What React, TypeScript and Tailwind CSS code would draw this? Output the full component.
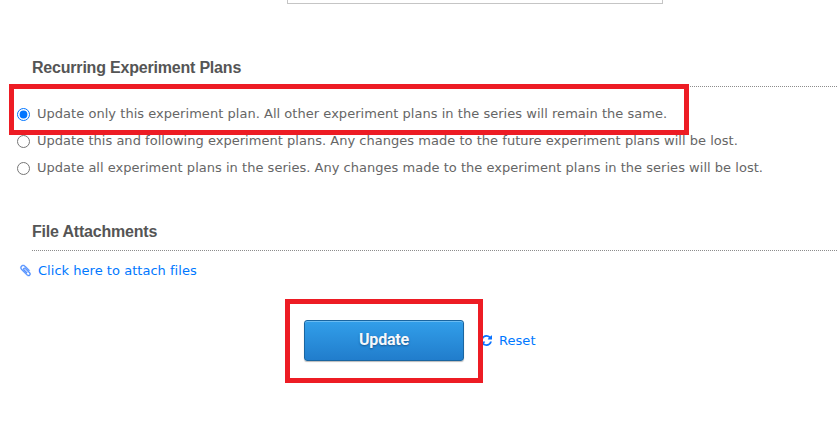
import React from 'react';

const options = [
  { label: 'Update only this experiment plan. All other experiment plans in the series will remain the same.', tracking: 'tracking-[0.034px]' },
  { label: 'Update this and following experiment plans. Any changes made to the future experiment plans will be lost.', tracking: 'tracking-[0.026px]' },
  { label: 'Update all experiment plans in the series. Any changes made to the experiment plans in the series will be lost.', tracking: 'tracking-[0.024px]' },
];

function SectionTitle({ children }: { children: React.ReactNode }) {
  return (
    <h2 className="ml-8 h-[30px] border-b border-dotted border-[#8c8c8c] font-['Liberation_Sans',Arial,sans-serif] text-base leading-[22px] font-bold tracking-[-0.2px] text-[#555]">
      {children}
    </h2>
  );
}

function PaperclipIcon() {
  return (
    <svg className="mb-px h-[13px] w-[13px] fill-[#4c8dff] stroke-[#4c8dff] stroke-[60]" viewBox="0 0 1792 1792" aria-hidden="true">
      <path d="M1596 1385q0 117-79 196t-196 79q-135 0-235-100l-777-776q-113-115-113-271 0-159 110-270t269-111q158 0 273 113l605 606q10 10 10 22 0 16-30.5 46.5t-46.5 30.5q-13 0-23-10l-606-607q-79-77-181-77-106 0-179 75t-73 181q0 105 76 181l776 777q63 63 145 63 64 0 106-42t42-106q0-82-63-145l-581-581q-26-24-60-24-29 0-48 19t-19 48q0 32 25 59l410 410q10 10 10 22 0 16-31 47t-47 31q-12 0-22-10l-410-410q-63-61-63-149 0-82 57-139t139-57q88 0 149 63l581 581q100 98 100 235z" />
    </svg>
  );
}

function RefreshIcon() {
  return (
    <svg className="mb-px h-[11px] w-[11px] fill-[#0a73ff]" viewBox="0 0 1536 1536" aria-hidden="true">
      <path d="M1511 928q0 5-1 7-64 268-268 434.5t-478 166.5q-146 0-282.5-55t-243.5-157l-129 129q-19 19-45 19t-45-19-19-45v-448q0-26 19-45t45-19h448q26 0 45 19t19 45-19 45l-137 137q71 66 161 102t187 36q134 0 250-65t186-179q11-17 53-117 8-23 30-23h192q13 0 22.5 9.5t9.5 22.5zm25-800v448q0 26-19 45t-45 19h-448q-26 0-45-19t-19-45 19-45l138-138q-148-137-349-137-134 0-250 65t-186 179q-11 17-53 117-8 23-30 23h-199q-13 0-22.5-9.5t-9.5-22.5v-7q65-268 270-434.5t480-166.5q146 0 284 55.5t245 156.5l130-129q19-19 45-19t45 19 19 45z" />
    </svg>
  );
}

export default function App() {
  return (
    <main className="relative h-[430px] w-full overflow-hidden bg-white font-[Verdana,'DejaVu_Sans',sans-serif] text-[13px] text-[#666]">
      <div className="ml-[287px] h-1 w-[376px] border-x border-b border-[#c5c5c5]" />

      <section className="pt-[53px]">
        <SectionTitle>Recurring Experiment Plans</SectionTitle>
        <div className="flex flex-col pt-[13px] pl-[17px]">
          {options.map((option, index) => (
            <label key={option.label} className="flex h-[27px] items-center gap-[7px] whitespace-nowrap">
              <input type="radio" name="recurrence" defaultChecked={index === 0} className="mt-px h-[13px] w-[13px] shrink-0" />
              <span className={option.tracking}>{option.label}</span>
            </label>
          ))}
        </div>
      </section>

      <section className="pt-10">
        <SectionTitle>File Attachments</SectionTitle>
        <a className="mt-[10px] ml-[19px] flex h-5 items-center gap-[6px] whitespace-nowrap text-[#0078ff]">
          <PaperclipIcon />
          <span className="tracking-[0.03px]">Click here to attach files</span>
        </a>
      </section>

      <div className="mt-[39px] ml-[304px] flex items-center">
        <button className="h-[41px] w-40 rounded-[3px] border border-[#1a65a0] bg-linear-to-b from-[#329fea] to-[#217dcc] pb-px font-['Roboto',sans-serif] text-base font-bold tracking-[-0.2px] text-[#f5f8fb] shadow-[inset_0_1px_0_#69bcf3,0_1px_1px_#bbb] text-shadow-[0_1px_2px_#17578e]">
          Update
        </button>
        <a className="ml-[17px] flex items-center gap-[7px] text-[#0078ff]">
          <RefreshIcon />
          <span className="tracking-[0.05px]">Reset</span>
        </a>
      </div>

      <div className="pointer-events-none absolute top-[84px] left-[9px] h-[51px] w-[680px] border-5 border-[#ed1c24]" />
      <div className="pointer-events-none absolute top-[299px] left-[285px] h-[84px] w-[198px] border-5 border-[#ed1c24]" />
    </main>
  );
}
